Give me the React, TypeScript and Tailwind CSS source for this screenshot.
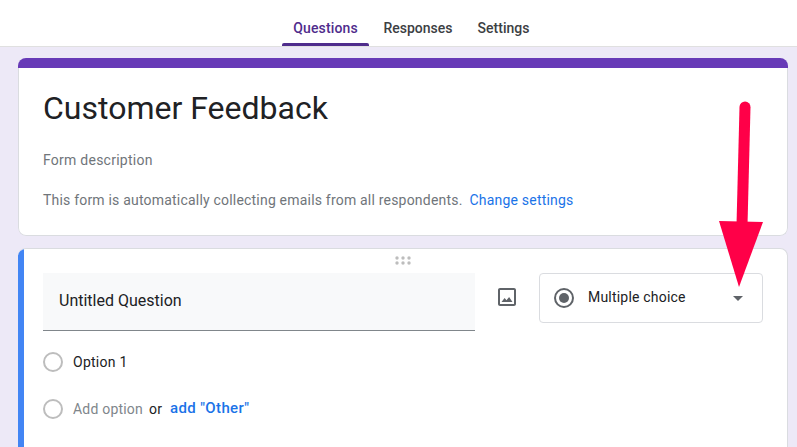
import React from "react";

function Radio({ className = "" }: { className?: string }) {
  return <div className={"w-5 h-5 rounded-full border-2 border-[#bdbdbd] shrink-0 " + className} />;
}

function DragDots() {
  return (
    <svg width="16" height="9" viewBox="0 0 16 9" className="fill-[#bdbdbd]">
      <circle cx="2" cy="2" r="1.7" />
      <circle cx="8" cy="2" r="1.7" />
      <circle cx="14" cy="2" r="1.7" />
      <circle cx="2" cy="7" r="1.7" />
      <circle cx="8" cy="7" r="1.7" />
      <circle cx="14" cy="7" r="1.7" />
    </svg>
  );
}

function ImageIcon() {
  return (
    <svg width="24" height="24" viewBox="0 0 24 24" className="fill-[#5f6368]">
      <path d="M19 5v14H5V5h14m0-2H5c-1.1 0-2 .9-2 2v14c0 1.1.9 2 2 2h14c1.1 0 2-.9 2-2V5c0-1.1-.9-2-2-2z" />
      <path d="M14.1 11.9l-2.6 3.4-1.9-2.3L6.5 17h11z" />
    </svg>
  );
}

export default function App() {
  return (
    <div
      className="relative w-[797px] h-[447px] overflow-hidden bg-[#ede9f7] text-[#202124]"
      style={{ fontFamily: "Roboto, sans-serif" }}
    >
      {/* TABS */}
      <div className="h-[47px] bg-white border-b border-[#e0e0e0] flex pl-[282px]">
        <div className="relative w-[87px] flex justify-center pt-[18px] text-sm font-medium tracking-[0.15px] text-[#4f2c8c]">
          Questions
          <div className="absolute left-0 right-0 bottom-0 h-[3px] bg-[#4f2c8c] rounded-t-[2px]" />
        </div>
        <div className="w-[98px] flex justify-center pt-[18px] text-sm font-medium text-[#3c4043]">Responses</div>
        <div className="w-[73px] flex justify-center pt-[18px] text-sm font-medium text-[#3c4043]">Settings</div>
      </div>

      <div className="pl-[18px] pt-[11px] flex flex-col gap-3">
        {/* TITLE CARD */}
        <div className="w-[770px] h-[178px] rounded-lg overflow-hidden flex flex-col">
          <div className="h-[10px] bg-[#673ab7] shrink-0" />
          <div className="flex-1 bg-white border border-t-0 border-[#dadce0] rounded-b-lg pl-[24px] pt-[20px]">
            <div className="text-[32px] leading-[40px] text-[#202124]">Customer Feedback</div>
            <div className="mt-[22px] text-sm leading-5 tracking-[0.25px] text-[#70757a]">Form description</div>
            <div className="mt-[20px] text-sm leading-5 tracking-[0.2px] text-[#70757a]">
              This form is automatically collecting emails from all respondents.
              <span className="ml-[7px] text-[#1a73e8]">Change settings</span>
            </div>
          </div>
        </div>

        {/* QUESTION CARD */}
        <div className="w-[770px] h-[220px] bg-white rounded-lg border border-[#dadce0] border-l-0 overflow-hidden flex">
          <div className="w-[6px] bg-[#4285f4] shrink-0" />
          <div className="flex-1 pl-[19px] pr-[25px]">
            <div className="h-6 flex justify-center items-start pt-[7px]">
              <DragDots />
            </div>
            <div className="flex items-start">
              <div className="w-[432px] h-[58px] bg-[#f8f9fa] border-b border-[#80868b] flex items-center pl-4 pb-[2px] text-base">
                Untitled Question
              </div>
              <div className="w-[64px] h-[48px] flex items-center justify-center">
                <ImageIcon />
              </div>
              <div className="w-[224px] h-[50px] border border-[#dadce0] rounded flex items-center pl-[14px] pr-[19px]">
                <div className="w-5 h-5 rounded-full border-2 border-[#5f6368] flex items-center justify-center">
                  <div className="w-[10px] h-[10px] rounded-full bg-[#5f6368]" />
                </div>
                <span className="ml-[14px] pb-[2px] flex-1 text-sm tracking-[0.2px]">Multiple choice</span>
                <div className="w-0 h-0 border-x-[5px] border-x-transparent border-t-[5px] border-t-[#5f6368]" />
              </div>
            </div>
            <div className="mt-[21px] flex items-center h-5">
              <Radio />
              <span className="ml-[10px] text-sm tracking-[0.25px]">Option 1</span>
            </div>
            <div className="mt-[27px] flex items-center h-5 text-sm">
              <Radio />
              <span className="ml-[10px] tracking-[0.2px] text-[#80868b]">Add option</span>
              <span className="ml-[6px] tracking-[0.2px]">or</span>
              <span className="ml-[8px] text-[15px] text-[#1a73e8] font-medium tracking-[0.35px]">add "Other"</span>
            </div>
          </div>
        </div>
      </div>

      {/* ARROW ANNOTATION */}
      <svg width="60" height="200" viewBox="0 0 60 200" className="absolute left-[710px] top-[95px]">
        <path d="M35 12 L32 130" stroke="#ff0048" strokeWidth="11" strokeLinecap="round" fill="none" />
        <path d="M9 126 L53 127 L29 192 Z" fill="#ff0048" />
      </svg>
    </div>
  );
}
